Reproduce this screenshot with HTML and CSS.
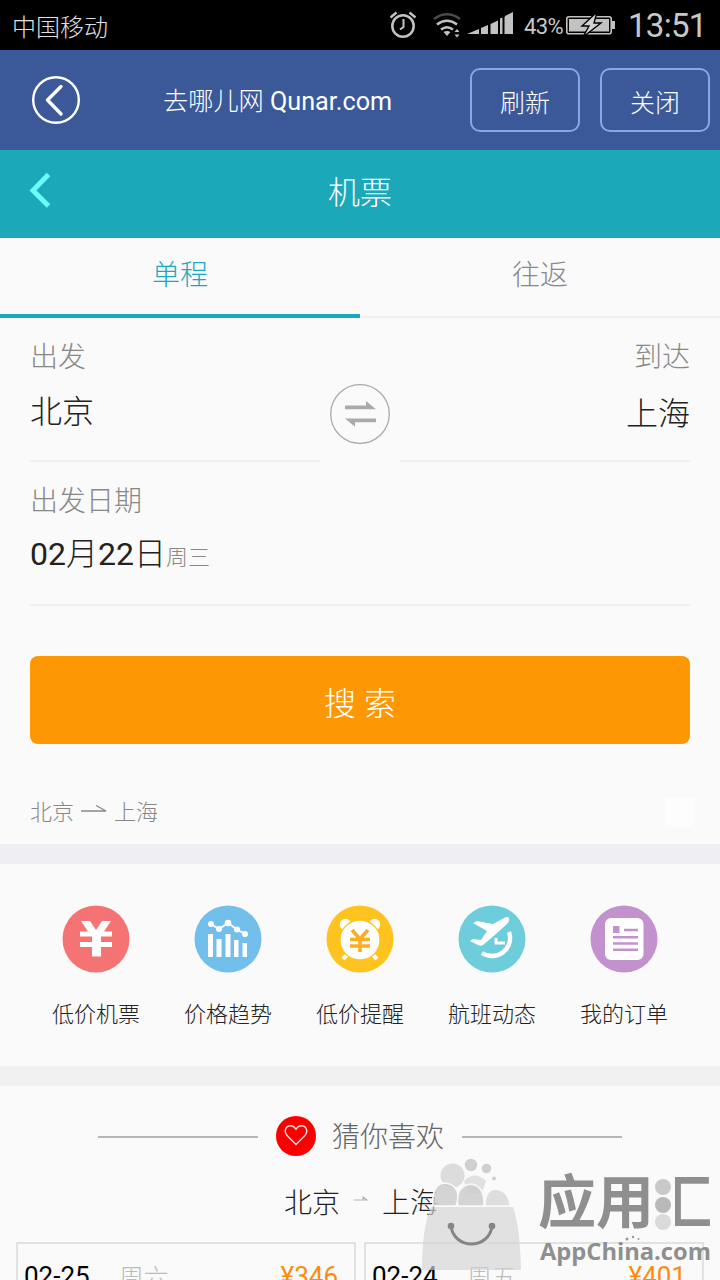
FILE: index.html
```
<!DOCTYPE html>
<html lang="zh-CN">
<head>
<meta charset="utf-8">
<title>去哪儿网 机票</title>
<link rel="stylesheet" href="styles.css">
</head>
<body>
<div class="screen">
  <header class="status">
    <span class="carrier">中国移动</span>
    <svg class="status-icons" width="132" height="32" viewBox="388 9 132 32" fill="none" stroke="#c2c2c2">
      <circle cx="403" cy="26" r="10.7" stroke-width="2.5"/>
      <path d="M390.500 17.500l6-5M415.500 17.500l-6-5" stroke-width="2.300"/>
      <path d="M403.500 19v8l-3.500 2.500" stroke-width="2"/>
      <path d="M434 19q13-9.500 26 0" stroke="#4b4b4b" stroke-width="2.400"/>
      <path d="M437 24.500q10-7.500 20 0M441 29.500q6-4.500 12 0" stroke-width="2.600"/>
      <path d="M443.500 32q3.500-2 7 0l-3.500 4zM454.500 32l2.500-3 2.500 3zM454.500 34.500l2.500 3 2.500-3z" fill="#c2c2c2" stroke="none"/>
      <path d="M467 34l12-5v5zM481 28l7-3v9h-7zM490.500 24l7.500-3.500V34h-7.500zM500 18.500l8-3V34h-8zM505 16l8-4v22h-8z" fill="#c2c2c2" stroke="none"/>
      <path d="M503.500 12v23" stroke="#000" stroke-width="2"/>
    </svg>
    <span class="percent">43%</span>
    <svg class="battery" width="52" height="28" viewBox="564 11 52 28">
      <rect x="566.800" y="16.800" width="44.400" height="17" rx="2" fill="none" stroke="#c2c2c2" stroke-width="1.600"/>
      <path d="M569 19h40v12.500h-40zM612 21h3v8h-3z" fill="#c2c2c2"/>
      <path d="M597 12l-15 14h7l-6 11 18-14h-7z" fill="#d2d2d2" stroke="#000" stroke-width="1.400"/>
    </svg>
    <span class="clock">13:51</span>
  </header>

  <div class="appbar">
    <svg class="appbar-back" width="50" height="50" viewBox="0 0 50 50" fill="none" stroke="#fff">
      <circle cx="25" cy="25" r="22.800" stroke-width="2.400"/>
      <path d="M30 11.500L16.500 25 30 39" stroke-width="3.400" stroke-linecap="round" stroke-linejoin="round"/>
    </svg>
    <h1 class="site"><span class="site-cn">去哪儿网</span> Qunar.com</h1>
    <button class="bar-btn">刷新</button>
    <button class="bar-btn">关闭</button>
  </div>

  <div class="titlebar">
    <svg class="title-back" width="24" height="38" viewBox="0 0 24 38"><path d="M20.500 3.500L5 19.500l15.500 15.500" fill="none" stroke="#6bfcf8" stroke-width="5"/></svg>
    <h2 class="title">机票</h2>
  </div>

  <nav class="tabs">
    <a class="tab active">单程</a>
    <a class="tab">往返</a>
  </nav>

  <section class="form">
    <div class="route">
      <div class="place">
        <span class="label">出发</span>
        <span class="city">北京</span>
      </div>
      <svg class="swap" width="62" height="62" viewBox="0 0 62 62">
        <circle cx="31" cy="31" r="29.300" fill="none" stroke="#aaa" stroke-width="1.300"/>
        <path d="M16 22.500h21v-4.500l10 8.200H16zM47 39.200H26v4.500L16 35.500h31z" fill="#aaa"/>
      </svg>
      <div class="place to">
        <span class="label">到达</span>
        <span class="city">上海</span>
      </div>
    </div>
    <div class="date">
      <span class="label">出发日期</span>
      <span class="day"><b>02</b>月<b>22</b>日<small class="week">周三</small></span>
    </div>
    <button class="search">搜 索</button>
    <div class="history">
      <span>北京</span>
      <svg width="26" height="12" viewBox="0 0 26 12"><path d="M0 7h25L15 1.500" fill="none" stroke="#888" stroke-width="1.300"/></svg>
      <span>上海</span>
      <i class="clear"></i>
    </div>
  </section>

  <nav class="services">
    <a class="service">
      <svg width="68" height="68" viewBox="0 0 68 68">
        <circle cx="34" cy="34" r="33.500" fill="#f57373"/>
        <path d="M19 16h9l6 9 6-9h9l-7 10.500h8v5H18v-5h8zM18 37h32v5H39v9.500h-9V42H18zM30 31h9v7h-9z" fill="#fff"/>
      </svg>
      <span>低价机票</span>
    </a>
    <a class="service">
      <svg width="68" height="68" viewBox="0 0 68 68">
        <circle cx="34" cy="34" r="33.500" fill="#71bfea"/>
        <path d="M14 29h5v23h-5zM22.500 34h5v18h-5zM31.500 29h5v23h-5zM40 35h4.500v17H40zM48.500 38h4.500v14h-4.500z" fill="#fff"/>
        <path d="M17 19l8 5 9-6 9 6.500 8 4.500" fill="none" stroke="#fff" stroke-width="2"/>
        <g fill="#fff"><circle cx="17" cy="19" r="3"/><circle cx="25" cy="24" r="3"/><circle cx="34" cy="18" r="3.300"/><circle cx="43" cy="24.500" r="3"/><circle cx="51" cy="29" r="3"/></g>
      </svg>
      <span>价格趋势</span>
    </a>
    <a class="service">
      <svg width="68" height="68" viewBox="0 0 68 68">
        <circle cx="34" cy="34" r="33.500" fill="#ffc31f"/>
        <path d="M21 50l-4 4M47 50l4 4" stroke="#fff" stroke-width="4"/>
        <g fill="#fff"><circle cx="19.500" cy="19.500" r="5.700"/><circle cx="48.500" cy="19.500" r="5.700"/><circle cx="34" cy="35" r="20" stroke="#ffc31f" stroke-width="1.300"/></g>
        <path d="M26 25l8 9 8-9M24 34.500h20M24 41h20M34 33v14" fill="none" stroke="#fbae22" stroke-width="3.600"/>
      </svg>
      <span>低价提醒</span>
    </a>
    <a class="service">
      <svg width="68" height="68" viewBox="0 0 68 68">
        <circle cx="34" cy="34" r="33.500" fill="#6dcddb"/>
        <path d="M50 25A18 18 0 0 1 23 46" fill="none" stroke="#fff" stroke-width="4.400" transform="translate(1 2)"/>
        <path d="M38 33v5h9" fill="none" stroke="#fff" stroke-width="3"/>
        <path d="M15 18l4-2 16 3 11-6q4-2 5 0 1 3-2 6L38 29 25 40q-3 2-7-1l-6-3 3-2 8 1 6-9z" fill="#fff"/>
      </svg>
      <span>航班动态</span>
    </a>
    <a class="service">
      <svg width="68" height="68" viewBox="0 0 68 68">
        <circle cx="34" cy="34" r="33.500" fill="#c491cf"/>
        <rect x="15" y="13" width="38.500" height="42" rx="6" fill="#fff"/>
        <path d="M23 21h6.500v7H23z" fill="#c491cf"/>
        <path d="M34 25h14M23 32.300h25M23 38.500h25M23 44.700h25" stroke="#c491cf" stroke-width="2.400"/>
      </svg>
      <span>我的订单</span>
    </a>
  </nav>

  <section class="guess">
    <div class="guess-head">
      <i class="rule"></i>
      <svg width="40" height="40" viewBox="0 0 40 40">
        <circle cx="20" cy="20" r="20" fill="#fa0000"/>
        <path d="M20 28.500l-8.500-8.500C7 15 10 9.700 14.500 9.700c3 0 4.500 1.800 5.500 3.500 1-1.700 2.500-3.500 5.500-3.500C30 9.700 33 15 28.500 20z" fill="none" stroke="#ffe3e3" stroke-width="1.400"/>
      </svg>
      <h3>猜你喜欢</h3>
      <i class="rule"></i>
    </div>
    <div class="guess-route">
      <span>北京</span>
      <svg width="14" height="10" viewBox="0 0 14 10"><path d="M0 4h13L9 1v3" fill="none" stroke="#b5b5b5" stroke-width="1.200"/></svg>
      <span>上海</span>
    </div>
    <div class="deals">
      <a class="deal"><span>02-25</span><span class="deal-week">周六</span><span class="price">¥346</span></a>
      <a class="deal"><span>02-24</span><span class="deal-week">周五</span><span class="price">¥401</span></a>
    </div>
  </section>

  <div class="watermark">
    <svg class="bag" width="102" height="114" viewBox="420 1156 102 114">
      <circle cx="471" cy="1165" r="6.200" fill="#d0d0d0"/>
      <circle cx="486.500" cy="1168.500" r="4.800" fill="#d0d0d0"/>
      <circle cx="494" cy="1178.500" r="2" fill="#d0d0d0"/>
      <circle cx="452.500" cy="1175.500" r="12" fill="#dcdcdc"/>
      <path d="M464 1181q11-11 22 0l-4 12h-14z" fill="#e0e0e0"/>
      <g fill="#cdcdcd" fill-opacity=".86" stroke="#fafafa" stroke-width="1.500">
        <path d="M433 1206q-2-21 11-23 15 1 14 17l-2 6z"/>
        <path d="M458 1206q-3-20 13-22 14 2 13 22z"/>
        <path d="M485 1206q0-16 10-17 14 1 15 17z" fill="#d8d8d8"/>
      </g>
      <path d="M431 1207h82q7 20 8 63h-99q0-43 9-63z" fill="#d4d4d4" fill-opacity=".68"/>
      <path d="M451 1226c3 24 38 24 41 0" fill="none" stroke="#858585" stroke-width="3"/>
      <g fill="#858585"><circle cx="451" cy="1226" r="3.300"/><circle cx="492" cy="1226" r="3.300"/></g>
    </svg>
    <div class="brand">
      <div class="brand-cn">应用<span class="hui">汇</span>
        <svg class="dots" width="18" height="54" viewBox="0 0 18 54"><circle cx="9" cy="9" r="8" fill="#c9c9c9"/><circle cx="9" cy="27" r="8" fill="#b9b9b9"/><circle cx="9" cy="44" r="8" fill="#dadada"/></svg>
      </div>
      <svg class="sparks" width="16" height="6" viewBox="0 0 16 6" fill="#999"><circle cx="2" cy="4" r="1.500"/><circle cx="8" cy="2" r="1.200"/><circle cx="13.500" cy="4" r="1"/></svg>
      <div class="brand-en">AppChina.com</div>
    </div>
  </div>
</div>
</body>
</html>
```

FILE: styles.css
```
* { box-sizing: border-box; }
body {
  margin: 0;
  background: #fafafa;
  font-family: Roboto, "Noto Sans CJK SC", sans-serif;
  font-weight: 300;
  color: #222;
}
svg { display: block; flex: none; }
h1, h2, h3 { margin: 0; font-weight: inherit; }
button { padding: 0; font-family: inherit; font-weight: inherit; }
.screen { position: relative; width: 720px; height: 1280px; overflow: hidden; }

.status {
  display: flex;
  align-items: center;
  height: 50px;
  padding-left: 12px;
  background: #000;
  color: #c8c8c8;
  white-space: nowrap;
}
.carrier { width: 376px; font-size: 24px; color: #e0e0e0; }
.percent { width: 44px; margin-left: 4px; padding-top: 2px; font-size: 22px; font-weight: 400; letter-spacing: -.6px; }
.battery { margin-left: -4px; }
.clock { margin-left: 12px; font-size: 33px; font-weight: 400; letter-spacing: -.7px; }

.appbar {
  display: flex;
  align-items: center;
  height: 100px;
  padding: 0 10px 0 31px;
  background: #3b5998;
  color: #fff;
}
.site { width: 307px; margin-left: 82px; padding-top: 4px; font-size: 25.200px; font-weight: 400; line-height: 40px; white-space: nowrap; }
.site-cn { font-weight: 300; }
.bar-btn {
  flex: none;
  width: 110px;
  height: 64px;
  margin-right: 20px;
  padding-top: 2px;
  border: 2px solid #84a8e4;
  border-radius: 10px;
  background: none;
  color: #fff;
  font-size: 25px;
}
.bar-btn:last-child { margin-right: 0; }

.titlebar {
  display: flex;
  align-items: center;
  height: 88px;
  padding: 0 28px;
  background: #1ba9ba;
  color: #fff;
}
.title-back { margin-top: -8px; }
.title { flex: 1; margin-right: 24px; padding-bottom: 9px; text-align: center; font-size: 32px; }

.tabs { display: flex; height: 80px; }
.tab {
  flex: 1;
  padding-top: 2px;
  border-bottom: 2px solid #f0f0f0;
  color: #888;
  font-size: 28px;
  line-height: 72px;
  text-align: center;
}
.tab.active { border-bottom: 4px solid #1ba9ba; color: #1ba9ba; }

.form { height: 526px; padding: 0 30px; }
.label { color: #888; font-size: 28px; line-height: 40px; }
.route { display: flex; justify-content: space-between; height: 144px; }
.place {
  display: flex;
  flex-direction: column;
  gap: 10px;
  width: 290px;
  padding-top: 20px;
  border-bottom: 2px solid #f0f0f0;
}
.place.to { align-items: flex-end; gap: 12px; }
.city { font-size: 32px; line-height: 48px; }
.swap { margin-top: 65px; }
.date {
  display: flex;
  flex-direction: column;
  gap: 8px;
  height: 144px;
  padding-top: 20px;
  border-bottom: 2px solid #f0f0f0;
}
.day { font-size: 32px; line-height: 48px; }
.day b { font-weight: 400; }
.week { color: #888; font-size: 22px; }
.search {
  display: block;
  width: 660px;
  height: 88px;
  margin-top: 50px;
  padding-top: 2px;
  border: 0;
  border-radius: 8px;
  background: #fd9804;
  color: #fff;
  font-size: 32px;
}
.history {
  display: flex;
  align-items: center;
  gap: 7px;
  height: 100px;
  padding-top: 32px;
  color: #888;
  font-size: 22px;
}
.clear { width: 29px; height: 29px; margin: 4px -4px 0 auto; background: #fdfdfd; }

.services {
  display: flex;
  height: 242px;
  padding: 41px 30px 0;
  border-top: 20px solid #eeeef3;
  border-bottom: 20px solid #f0f0f0;
}
.service {
  display: flex;
  flex: 1;
  flex-direction: column;
  align-items: center;
  gap: 26px;
  font-size: 22px;
  line-height: 32px;
}

.guess-head { display: flex; align-items: center; height: 100px; padding: 0 98px; }
.guess-head svg { margin: 0 16px 0 18px; }
.guess-head h3 { margin-right: 18px; padding-bottom: 2px; color: #666; font-size: 28px; }
.rule { flex: 1; height: 2px; margin-top: 2px; background: #b5b5b5; }
.guess-route {
  display: flex;
  align-items: center;
  gap: 14px;
  height: 56px;
  padding: 0 0 26px 284px;
  font-size: 28px;
}
.deals { display: flex; gap: 8px; padding-left: 16px; }
.deal {
  display: flex;
  flex: none;
  width: 340px;
  height: 80px;
  padding: 12px 16px 0 6px;
  border: 2px solid #e2e2e2;
  color: #000;
  font-size: 26px;
  font-weight: 400;
  line-height: 40px;
}
.deal-week { margin-left: 29px; padding-top: 3px; color: #bbb; font-size: 25px; font-weight: 300; }
.price { margin-left: auto; color: #fd8c0c; }

.watermark { position: absolute; left: 420px; top: 1156px; display: flex; gap: 16px; }
.brand { position: relative; padding-top: 9px; color: #8f8f8f; }
.brand-cn { font-size: 58px; font-weight: 700; line-height: 76px; white-space: nowrap; }
.hui {
  background: linear-gradient(90deg, transparent 36%, #8f8f8f 36%);
  -webkit-background-clip: text;
  background-clip: text;
  color: transparent;
}
.dots { position: absolute; left: 116px; top: 22px; }
.sparks { position: absolute; left: 87px; top: 79px; }
.brand-en { margin-left: 2px; font-family: "Open Sans", sans-serif; font-size: 23.700px; font-weight: 700; line-height: 20px; }
```
